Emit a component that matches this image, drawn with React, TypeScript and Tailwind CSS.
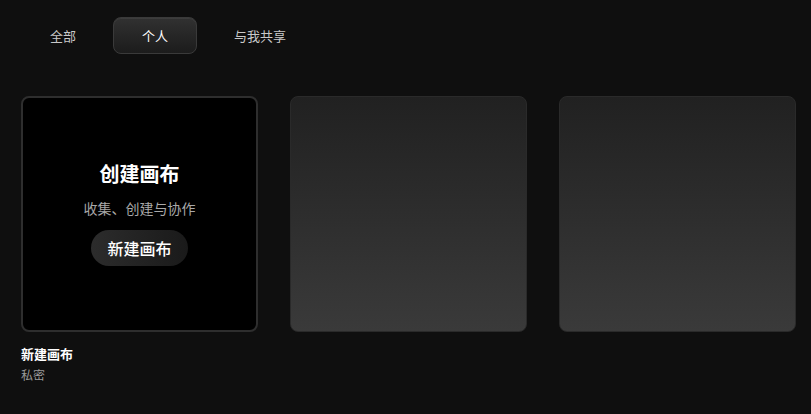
const tabs = ["全部", "个人", "与我共享"];

export default function App() {
  const active = "个人";

  return (
    <div
      className="min-h-screen w-full bg-[#0f0f0f] px-[21px] pt-[17px] text-white"
      style={{ fontFamily: '"Noto Sans CJK SC", "Noto Sans", sans-serif' }}
    >
      <div className="flex gap-2">
        {tabs.map((t) => (
          <button
            key={t}
            className={
              t === active
                ? "h-[37px] rounded-lg border border-[#3a3a3a] bg-gradient-to-b from-[#313131] to-[#1c1c1c] px-[28px] text-[13px] text-white shadow-[inset_0_1px_0_rgba(255,255,255,0.06)]"
                : "h-[37px] rounded-lg border border-transparent px-[28px] text-[13px] text-[#c8c8c8]"
            }
          >
            {t}
          </button>
        ))}
      </div>

      <div className="mt-[42px] flex gap-[32px]">
        <div className="flex w-[237px] shrink-0 flex-col">
          <div className="flex h-[236px] flex-col items-center justify-center rounded-lg border-2 border-[#2e2e2e] bg-black">
            <div className="-mt-[2px] text-xl font-bold leading-7">创建画布</div>
            <div className="mt-[10px] text-sm text-[#a8a8a8]">收集、创建与协作</div>
            <button className="mt-[12px] h-9 rounded-full bg-gradient-to-r from-[#2c2c2c] to-[#1a1a1a] px-4 text-base font-medium text-white">
              新建画布
            </button>
          </div>
          <div className="mt-[12px] text-[13px] font-bold leading-5">新建画布</div>
          <div className="mt-[1px] text-xs leading-5 text-[#9a9a9a]">私密</div>
        </div>

        {[0, 1].map((i) => (
          <div
            key={i}
            className="h-[236px] w-[237px] shrink-0 rounded-lg border border-[#2a2a2a] bg-gradient-to-b from-[#212121] to-[#3a3a3a]"
          />
        ))}
      </div>
    </div>
  );
}
